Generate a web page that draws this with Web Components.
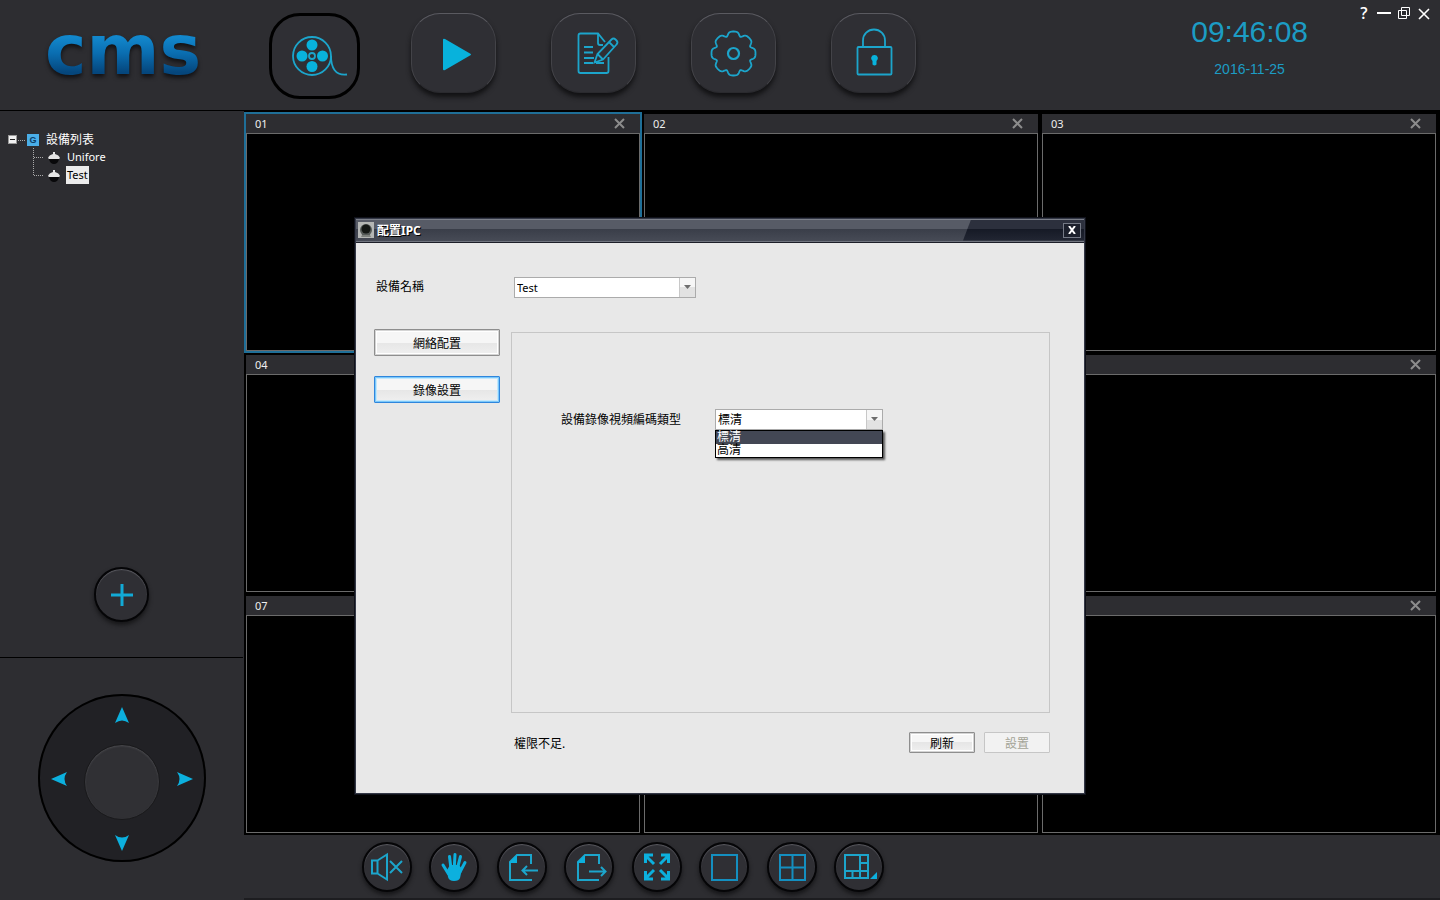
<!DOCTYPE html>
<html lang="zh-Hant">
<head>
<meta charset="utf-8">
<title>CMS</title>
<style>
  html, body { margin: 0; background: #2d2d31; }
  body { font: 11px/18px "Noto Sans", "Noto Sans CJK TC", sans-serif; color: #fff; }
</style>
</head>
<body>
<cms-app></cms-app>

<script>
const define = (name, html, setup) => {
  const template = document.createElement('template');
  template.innerHTML = html;
  customElements.define(name, class extends HTMLElement {
    constructor() {
      super();
      this.attachShadow({ mode: 'open' }).append(template.content.cloneNode(true));
    }
    connectedCallback() { if (setup) setup(this, this.shadowRoot); }
  });
};

/* Eight-lobed gear outline */
const gearPath = (cx, cy) => {
  const points = [];
  for (let i = 0; i < 192; i++) {
    const a = i * Math.PI / 96;
    const notch = (1 - Math.cos(8 * a)) / 2;
    const r = 22 - 4 * notch * notch * notch;
    points.push((cx + r * Math.cos(a)).toFixed(2) + ' ' + (cy + r * Math.sin(a)).toFixed(2));
  }
  return 'M' + points.join('L') + 'Z';
};

define('cms-logo', `
  <style>
    :host { display: block; }
    span {
      display: block; font: bold 70px/70px "DejaVu Sans", sans-serif;
      background: linear-gradient(#1287cc 32%, #0a6db0 55%, #05467c 82%);
      -webkit-background-clip: text; background-clip: text; color: transparent;
      filter: drop-shadow(0 3px 2px #111114);
    }
  </style>
  <span>cms</span>`);

define('nav-button', `
  <style>
    :host { display: block; }
    button {
      display: block; box-sizing: border-box; width: 85px; height: 80px; padding: 0;
      border: 1px solid #434348; border-top-color: #5a5a60; border-bottom-color: #2a2a2e;
      border-radius: 29px; background: #2f2f34;
      box-shadow: 0 4px 5px #111113;
    }
    :host([active]) { margin: 0 -4px 0 -2px; }
    :host([active]) button {
      width: 91px; height: 86px; border: 3px solid #000; border-radius: 31px; box-shadow: none;
    }
    ::slotted(svg) { display: block; margin: -1px; }
    :host([active]) ::slotted(svg) { margin: -3px; }
  </style>
  <button type="button"><slot></slot></button>`,
  (host, root) => root.querySelector('button').setAttribute('aria-label', host.getAttribute('label')));

define('round-button', `
  <style>
    :host { display: block; }
    button {
      display: grid; place-items: center; box-sizing: border-box;
      width: var(--size, 50px); height: var(--size, 50px); padding: 0;
      border: 2px solid #050507; border-radius: 50%; background: #2f2f34;
      box-shadow: inset 0 1px 1px #5c5c62, 0 3px 4px #161618;
    }
    ::slotted(svg) { display: block; margin: -2px; }
  </style>
  <button type="button"><slot></slot></button>`,
  (host, root) => root.querySelector('button').setAttribute('aria-label', host.getAttribute('label')));

define('cms-clock', `
  <style>
    :host { display: block; text-align: center; color: #1c9cc4; font-family: "Liberation Sans", Arial, sans-serif; }
    time { display: block; font-size: 30px; line-height: 36px; }
    time + time { font-size: 14px; line-height: 18px; margin-top: 10px; }
  </style>
  <time>09:46:08</time><time>2016-11-25</time>`);

define('window-controls', `
  <style>
    :host { display: flex; gap: 4px; }
    button { width: 16px; height: 18px; padding: 0; border: 0; background: none; color: #fff; font: 600 16px/18px "Open Sans", sans-serif; }
    svg { display: block; margin: auto; fill: none; stroke: #fff; }
  </style>
  <button type="button">?</button>
  <button type="button" aria-label="Minimise"><svg width="16" height="18"><path d="M1 9H15" stroke-width="2"/></svg></button>
  <button type="button" aria-label="Restore"><svg width="16" height="18"><path d="M5.500 3.500h8v8h-8zM2.500 6.500h8v8h-8z"/></svg></button>
  <button type="button" aria-label="Close"><svg width="16" height="18"><path d="M3 5L13 15M13 5L3 15" stroke-width="1.600"/></svg></button>`);

define('cms-header', `
  <style>
    :host { display: flex; align-items: flex-start; height: 110px; border-bottom: 1px solid #000; }
    cms-logo { flex: none; width: 271px; box-sizing: border-box; padding: 15px 0 0 45px; }
    nav { display: flex; gap: 55px; margin-top: 13px; }
    svg { fill: none; stroke: #1ca5cb; stroke-width: 1.8; }
    .solid { fill: #08b2dc; stroke: none; }
    cms-clock { margin: 14px 48px 0 auto; }
    window-controls { margin: 4px 8px 0 0; }
  </style>
  <cms-logo></cms-logo>
  <nav>
    <nav-button active label="Live view"><svg width="91" height="86">
      <circle cx="43" cy="43" r="19"/><circle cx="43" cy="43" r="3"/>
      <path d="M62 43C62 54 66 63 78 61.500"/>
      <g class="solid"><circle cx="43" cy="32" r="5.500"/><circle cx="33" cy="43" r="5.500"/><circle cx="53.500" cy="43" r="5.500"/><circle cx="43" cy="53.500" r="5.500"/></g>
    </svg></nav-button>
    <nav-button label="Playback"><svg width="85" height="80">
      <path class="solid" d="M32 27q0-2 2-1L59 40.500q2 1 0 2L34 57q-2 1-2-1z"/>
    </svg></nav-button>
    <nav-button label="Log"><svg width="85" height="80">
      <path d="M57.500 44V58q0 2-2 2H29.500q-2 0-2-2V22.500q0-2 2-2H47L54 29M47 21V30q0 2 2 2h3"/>
      <path d="M33 34h9M33 39.500h9M33 45h10M33 50h9M45 50h8"/>
      <path d="M43.500 49.500L46.500 41L60.500 26.500q2-2 4 0l1 1q2 2 0 4L52 46.500ZM46.500 41l5.500 5.500M58 29l5.500 5.500"/>
    </svg></nav-button>
    <nav-button label="Settings"><svg width="85" height="80">
      <path class="gear"/><circle cx="42.500" cy="40.500" r="5.500" stroke-width="2.200"/>
    </svg></nav-button>
    <nav-button label="Lock"><svg width="85" height="80">
      <rect x="26.500" y="34" width="34" height="27.500" rx="1"/>
      <path d="M32 34V27.500a11 11 0 0 1 22 0V34"/>
      <path class="solid" d="M43.500 42a3.300 3.300 0 0 1 2 6V51.500q-2 2-4 0V48a3.300 3.300 0 0 1 2-6z"/>
    </svg></nav-button>
  </nav>
  <cms-clock></cms-clock>
  <window-controls></window-controls>`,
  (host, root) => root.querySelector('.gear').setAttribute('d', gearPath(42.5, 40.5)));

define('device-tree', `
  <style>
    :host { display: block; padding: 20px 8px; }
    ul { list-style: none; margin: 0; padding: 0; }
    .row { display: flex; align-items: center; height: 18px; }
    .root { font-size: 12px; }
    .root svg { margin-right: 6px; }
    .name { padding: 0 1px; }
    .selected { background: #ececec; color: #000; }
    ul ul { padding-left: 25px; margin-top: -1px; }
    ul ul svg { margin-right: 5px; }
    .g { font: bold 9px "Liberation Sans", Arial, sans-serif; fill: #0a3d66; text-anchor: middle; }
  </style>
  <ul>
    <li>
      <div class="row root">
        <svg width="31" height="18"><rect x=".5" y="4.500" width="8" height="8" fill="#f2f2f2" stroke="#9a9a9a"/><path d="M2 8.500h5" stroke="#222"/><path d="M10 9.500h8" stroke="#aaa" stroke-dasharray="1 1"/><rect x="19" y="3" width="12" height="12" fill="#4aaee8"/><text class="g" x="25" y="12">G</text></svg>
        <span class="name">設備列表</span>
      </div>
      <ul>
        <li class="row"><svg width="28" height="18"><path d="M.5 0V18M1 9.500h10" stroke="#aaa" stroke-dasharray="1 1"/><path d="M15 10q1-3 5-4V4h2v2q4 1 5 4l-1 1H16z" fill="#e4e4e4"/><path d="M16 11h10q-1 5-5 5t-5-5z" fill="#08080a"/></svg><span class="name">Unifore</span></li>
        <li class="row"><svg width="28" height="18"><path d="M.5 0V9M1 9.500h10" stroke="#aaa" stroke-dasharray="1 1"/><path d="M15 10q1-3 5-4V4h2v2q4 1 5 4l-1 1H16z" fill="#e4e4e4"/><path d="M16 11h10q-1 5-5 5t-5-5z" fill="#08080a"/></svg><span class="name selected">Test</span></li>
      </ul>
    </li>
  </ul>`);

define('ptz-pad', `
  <style>
    :host {
      display: grid; grid-template: 50px 76px 42px / 46px 76px 46px;
      border-radius: 50%; background: #212125; box-shadow: inset 0 0 0 2px #000;
    }
    button { display: grid; place-items: center; padding: 0; border: 0; background: none; }
    .up { grid-area: 1 / 2; padding-bottom: 8px; }
    .left { grid-area: 2 / 1; padding: 0 4px 6px 0; }
    .right { grid-area: 2 / 3; padding: 0 0 6px 4px; }
    .down { grid-area: 3 / 2; padding-top: 4px; }
    .home { grid-area: 2 / 2; border-radius: 50%; background: #303034; border: 1px solid #19191b; box-shadow: inset 0 1px 2px #4c4c50; }
    svg { display: block; fill: #0cb0de; }
    .left svg { rotate: -90deg; } .right svg { rotate: 90deg; } .down svg { rotate: 180deg; }
  </style>
  <button type="button" class="up" aria-label="Up"><svg width="18" height="18"><path d="M9 1L16 17Q9 12 2 17z"/></svg></button>
  <button type="button" class="left" aria-label="Left"><svg width="18" height="18"><path d="M9 1L16 17Q9 12 2 17z"/></svg></button>
  <button type="button" class="home" aria-label="Centre"></button>
  <button type="button" class="right" aria-label="Right"><svg width="18" height="18"><path d="M9 1L16 17Q9 12 2 17z"/></svg></button>
  <button type="button" class="down" aria-label="Down"><svg width="18" height="18"><path d="M9 1L16 17Q9 12 2 17z"/></svg></button>`);

define('cms-sidebar', `
  <style>
    :host { display: flex; flex-direction: column; padding-right: 1px; }
    device-tree { flex: 1; }
    round-button { --size: 55px; align-self: center; margin-bottom: 35px; }
    section { display: flex; justify-content: center; border-top: 1px solid #000; padding: 36px 0 38px; }
  </style>
  <device-tree></device-tree>
  <round-button label="Add device"><svg width="24" height="24" stroke="#12aad6" stroke-width="3"><path d="M12 1V23M1 12H23"/></svg></round-button>
  <section><ptz-pad></ptz-pad></section>`);

define('video-pane', `
  <style>
    :host { display: flex; flex-direction: column; background: #000; }
    :host([active]) { outline: 2px solid #1f6f98; }
    header { display: flex; justify-content: space-between; align-items: center; height: 19px; padding: 0 15px 0 9px; background: #2d2d31; color: #eee; }
    button { padding: 0; border: 0; background: none; }
    svg { display: block; stroke: #8c8c8c; stroke-width: 2; }
    .view { flex: 1; border: 1px solid #6b6b6b; }
  </style>
  <header><slot></slot><button type="button" aria-label="Close"><svg width="11" height="11"><path d="M1 1L10 10M10 1L1 10"/></svg></button></header>
  <div class="view"></div>`);

define('video-wall', `
  <style>
    :host { display: grid; grid-template: repeat(3, 1fr) / repeat(3, 1fr); gap: 4px; padding: 3px 4px 2px 2px; background: #000; }
  </style>
  <video-pane active>01</video-pane><video-pane>02</video-pane><video-pane>03</video-pane>
  <video-pane>04</video-pane><video-pane>05</video-pane><video-pane>06</video-pane>
  <video-pane>07</video-pane><video-pane>08</video-pane><video-pane>09</video-pane>`);

define('view-toolbar', `
  <style>
    :host { display: block; padding: 7px 0 6px 118px; border-bottom: 2px solid #1d1d20; }
    div { display: flex; justify-content: space-between; max-width: 522px; }
    svg { fill: none; stroke: #1ca5cb; stroke-width: 2; }
    .solid { fill: #0cb0de; stroke: none; }
    .hand { stroke: #0cb0de; stroke-width: 3; stroke-linecap: round; }
    .grid { stroke: #148fc0; }
  </style>
  <div>
    <round-button label="Mute"><svg width="50" height="50"><path d="M10 18.500h5.500V31.500H10zM15.500 18.500L25 12.500V37.500L15.500 31.500M28 19L40 31M40 19L28 31"/></svg></round-button>
    <round-button label="Pan"><svg width="50" height="50"><path class="solid" d="M18 28L21 23H30L33 27L31 36Q30 39 25 39T19 35z"/><path class="hand" d="M19.500 32L14 23M22 27L20.500 14.500M25.300 25L26 12.500M28.500 26L31.500 14.500M31 30L36 20.500"/></svg></round-button>
    <round-button label="Import"><svg width="50" height="50"><path d="M34 22V13H20L13 20V38H35M26 28.500H41M30 24L25.500 28.500L30 33"/><path class="solid" d="M20 13V21H12z"/></svg></round-button>
    <round-button label="Export"><svg width="50" height="50"><path d="M35 22V13H21L14 20V38H35M25 29.500H41M37 25L41.500 29.500L37 34"/><path class="solid" d="M21 13V21H13z"/></svg></round-button>
    <round-button label="Full screen"><svg width="50" height="50"><g stroke="#0cb0de" stroke-width="3"><path d="M21 13H13.500V21M14 14L22 22M29 13H36.500V21M36 14L28 22M21 37H13.500V29M14 36L22 28M29 37H36.500V29M36 36L28 28"/></g></svg></round-button>
    <round-button label="Single view"><svg width="50" height="50"><path class="grid" d="M13 13H38V38H13z"/></svg></round-button>
    <round-button label="Four views"><svg width="50" height="50"><path class="grid" d="M13 13H38V38H13zM25.500 13V38M13 25.500H38"/></svg></round-button>
    <round-button label="Six views"><svg width="50" height="50"><path d="M11 13H34V36H11zM26 13V36M11 29H34M26 21H34M18.500 29V36"/><path class="solid" d="M43 30V37H36z"/></svg></round-button>
  </div>`);

define('combo-box', `
  <style>
    :host { display: block; position: relative; }
    .field { display: flex; box-sizing: border-box; height: 21px; border: 1px solid #ababab; background: #fff; }
    select { appearance: none; flex: 1; min-width: 0; margin: 0; padding: 1px 2px 0; border: 0; border-radius: 0; background: #fff; color: #000; font: inherit; outline: 0; }
    .arrow { display: grid; place-items: center; width: 15px; border-left: 1px solid #c8c8c8; background: linear-gradient(#f6f6f6 50%, #e2e2e2 50%); pointer-events: none; }
    ul {
      position: absolute; top: 21px; left: 0; right: 0; box-sizing: border-box; list-style: none;
      margin: 0; padding: 0; border: 1px solid #000; background: #fff; color: #000;
      font: 12px/13px "Liberation Sans", "Noto Sans CJK TC", sans-serif;
      box-shadow: 2px 2px 2px #555;
    }
    li { padding-left: 1px; height: 13px; }
    li[aria-selected="true"] { background: #434754; color: #fff; }
  </style>
  <div class="field"><select></select><span class="arrow"><svg width="7" height="4"><path d="M0 0H7L3.500 4z" fill="#6e6e6e"/></svg></span></div>`,
  (host, root) => {
    const select = root.querySelector('select');
    const options = host.getAttribute('options').split(',');
    select.setAttribute('aria-label', host.getAttribute('label'));
    options.forEach(text => select.add(new Option(text)));
    if (host.hasAttribute('open')) {
      const list = document.createElement('ul');
      list.setAttribute('role', 'listbox');
      options.forEach((text, i) => {
        const item = document.createElement('li');
        item.setAttribute('role', 'option');
        item.setAttribute('aria-selected', String(i === 0));
        item.textContent = text;
        list.append(item);
      });
      root.append(list);
    }
  });

define('push-button', `
  <style>
    :host { display: block; }
    button {
      display: block; box-sizing: border-box; width: 100%; height: var(--height, 21px); padding: 2px 0 0;
      border: 1px solid #8e8e8e; border-radius: 1px; color: #000; font: inherit; line-height: 17px;
      background: linear-gradient(#f6f6f6 50%, #e6e6e6 50%, #f0f0f0);
      box-shadow: inset 0 0 0 1px #d4d4d4, inset 0 0 0 2px #fff;
    }
    :host([focused]) button { border-color: #2f86dc; box-shadow: inset 0 0 0 1px #7cc8fa, inset 0 0 0 2px #c4e8fc; }
    :host([disabled]) button { border-color: #c6c6c6; box-shadow: none; background: #f2f2f2; color: #a3a396; }
  </style>
  <button type="button"><slot></slot></button>`,
  (host, root) => { root.querySelector('button').disabled = host.hasAttribute('disabled'); });

define('config-dialog', `
  <style>
    :host {
      display: block; box-sizing: border-box; width: 732px; border: 2px solid #343846;
      outline: 1px solid #10121a; outline-offset: -1px;
      background: #e8e8e8; color: #000; font-size: 12px;
    }
    header {
      display: flex; align-items: center; height: 23px; color: #fff; font-weight: bold; font-size: 12px;
      border-bottom: 1px solid #1c1e28; box-shadow: inset 0 1px #7b7f89, inset 0 -1px #71757f;
      background: linear-gradient(#575b66 45%, #3a3e49 45%, #484c57);
    }
    header > svg { flex: none; margin: 0 3px 0 2px; }
    h1 { flex: 1; margin: 0; padding-top: 2px; font-size: 12px; line-height: 18px; text-shadow: 1px 1px #000; }
    .corner {
      display: flex; align-items: center; justify-content: flex-end; box-sizing: border-box;
      width: 121px; height: 21px; padding-right: 3px;
      clip-path: polygon(8px 0, 100% 0, 100% 100%, 0 100%);
      background: linear-gradient(#2c303d 45%, #161a26 45%, #222633);
    }
    .corner button { width: 18px; height: 15px; padding: 0; border: 1px solid #747985; background: #1c202c; }
    .corner svg { display: block; margin: auto; }
    main { display: grid; grid-template-columns: 126px 1fr; column-gap: 11px; padding: 34px 34px 40px 18px; }
    .label { padding: 1px 0 0 2px; }
    .device { width: 182px; margin-left: 3px; font-size: 11px; }
    .tabs { display: grid; align-content: start; gap: 20px; --height: 27px; margin-top: 31px; }
    .panel { display: flex; align-items: flex-start; box-sizing: border-box; height: 381px; margin-top: 34px; padding: 76px 49px; border: 1px solid #c6c6c6; }
    .panel label { width: 154px; padding-top: 2px; }
    .codec { width: 168px; }
    footer { grid-column: 2; display: flex; align-items: center; gap: 9px; height: 21px; margin-top: 19px; }
    footer p { flex: 1; margin: 0; padding: 4px 3px 0; }
    footer push-button { width: 66px; }
  </style>
  <header>
    <svg width="16" height="16"><rect width="16" height="16" fill="#b4b6b4"/><circle cx="8" cy="8" r="6" fill="#555a58"/><circle cx="8" cy="7" r="4.500" fill="#141815"/><path d="M4 13h8l1 2H3z" fill="#7c807c"/></svg>
    <h1>配置IPC</h1>
    <div class="corner"><button type="button" aria-label="Close"><svg width="8" height="8"><path d="M1 0L7 8M7 0L1 8" stroke="#fff" stroke-width="2"/></svg></button></div>
  </header>
  <main>
    <label class="label">設備名稱</label>
    <combo-box class="device" label="設備名稱" options="Test"></combo-box>
    <div class="tabs">
      <push-button>網絡配置</push-button>
      <push-button focused>錄像設置</push-button>
    </div>
    <section class="panel">
      <label>設備錄像視頻編碼類型</label>
      <combo-box class="codec" label="設備錄像視頻編碼類型" options="標清,高清" open></combo-box>
    </section>
    <footer>
      <p>權限不足.</p>
      <push-button>刷新</push-button>
      <push-button disabled>設置</push-button>
    </footer>
  </main>`);

define('cms-app', `
  <style>
    :host {
      position: relative; display: grid; min-height: 100vh;
      grid-template: auto 1fr auto / 244px 1fr;
    }
    cms-header { grid-column: 1 / 3; }
    cms-sidebar { grid-row: 2 / 4; }
    .overlay { position: absolute; inset: 111px 0 0; display: grid; place-items: center; }
  </style>
  <cms-header></cms-header>
  <cms-sidebar></cms-sidebar>
  <video-wall></video-wall>
  <view-toolbar></view-toolbar>
  <div class="overlay"><config-dialog role="dialog"></config-dialog></div>`);
</script>
</body>
</html>
